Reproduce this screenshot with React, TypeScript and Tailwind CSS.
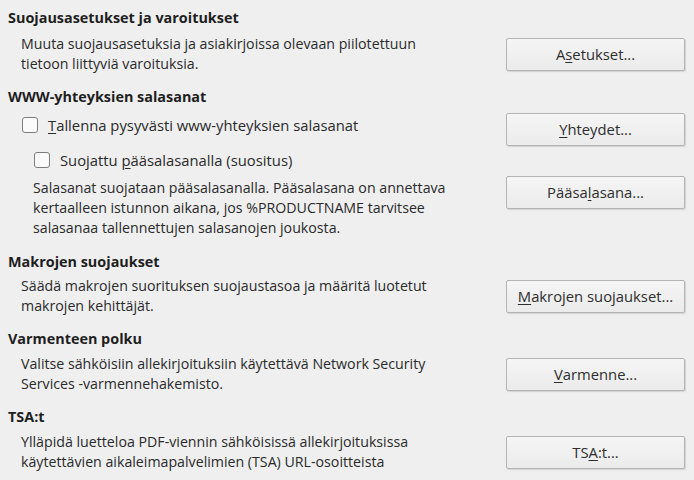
import React from "react";

function Btn({ pre, u, post, className = "" }: { pre: string; u: string; post: string; className?: string }) {
  return (
    <button
      className={
        "w-[179px] h-[33px] shrink-0 rounded-[2px] border border-[#b4b4b4] bg-gradient-to-b from-[#f5f5f5] to-[#ebebeb] shadow-[1px_1px_1px_rgba(0,0,0,0.12)] text-[14.8px] text-[#2e2e2e] " +
        className
      }
    >
      {pre}
      <span className="underline underline-offset-2">{u}</span>
      {post}
    </button>
  );
}

function Check({ pre, u, post }: { pre: string; u: string; post: string }) {
  return (
    <label className="flex items-center gap-[10px] leading-5 text-[14.8px]">
      <span className="w-4 h-4 shrink-0 rounded-[3px] border border-[#7d7d7d] bg-[#fbfbfb]" />
      <span>
        {pre}
        <span className="underline underline-offset-2">{u}</span>
        {post}
      </span>
    </label>
  );
}

function Heading({ children, className = "" }: { children: React.ReactNode; className?: string }) {
  return <h2 className={"h-5 leading-5 font-bold text-[14.4px] text-[#1e1e1e] " + className}>{children}</h2>;
}

export default function App() {
  return (
    <div
      className="w-[694px] h-[480px] overflow-hidden bg-[#efeff0] pl-2 pr-[9px] pt-2 text-[14.2px] text-[#2a2a2a]"
      style={{ fontFamily: '"Open Sans", "Noto Sans", sans-serif' }}
    >
      <Heading>Suojausasetukset ja varoitukset</Heading>
      <div className="mt-[6px] flex items-center justify-between">
        <p className="pl-[13px] leading-5">
          Muuta suojausasetuksia ja asiakirjoissa olevaan piilotettuun
          <br />
          tietoon liittyviä varoituksia.
        </p>
        <Btn pre="A" u="s" post="etukset..." />
      </div>

      <Heading className="mt-[13px]">WWW-yhteyksien salasanat</Heading>
      <div className="mt-[6px] flex items-start justify-between">
        <div className="pl-[14px] pt-[2px]">
          <Check pre="" u="T" post="allenna pysyvästi www-yhteyksien salasanat" />
        </div>
        <Btn pre="" u="Y" post="hteydet..." />
      </div>
      <div className="mt-[4px] pl-[26px]">
        <Check pre="Suojattu " u="p" post="ääsalasanalla (suositus)" />
      </div>
      <div className="mt-[6px] flex items-start justify-between">
        <p className="pl-[25px] pt-[2px] leading-5">
          Salasanat suojataan pääsalasanalla. Pääsalasana on annettava
          <br />
          kertaalleen istunnon aikana, jos %PRODUCTNAME tarvitsee
          <br />
          salasanaa tallennettujen salasanojen joukosta.
        </p>
        <Btn pre="Pääsa" u="l" post="asana..." />
      </div>

      <Heading className="mt-[14px]">Makrojen suojaukset</Heading>
      <div className="mt-[4px] flex items-center justify-between">
        <p className="pl-[13px] leading-5">
          Säädä makrojen suorituksen suojaustasoa ja määritä luotetut
          <br />
          makrojen kehittäjät.
        </p>
        <Btn pre="" u="M" post="akrojen suojaukset..." />
      </div>

      <Heading className="mt-[13px]">Varmenteen polku</Heading>
      <div className="mt-[5px] flex items-center justify-between">
        <p className="pl-[13px] leading-5">
          Valitse sähköisiin allekirjoituksiin käytettävä Network Security
          <br />
          Services -varmennehakemisto.
        </p>
        <Btn pre="" u="V" post="armenne..." />
      </div>

      <Heading className="mt-[13px]">TSA:t</Heading>
      <div className="mt-[5px] flex items-center justify-between">
        <p className="pl-[13px] leading-5">
          Ylläpidä luetteloa PDF-viennin sähköisissä allekirjoituksissa
          <br />
          käytettävien aikaleimapalvelimien (TSA) URL-osoitteista
        </p>
        <Btn pre="TS" u="A" post=":t..." />
      </div>
    </div>
  );
}
